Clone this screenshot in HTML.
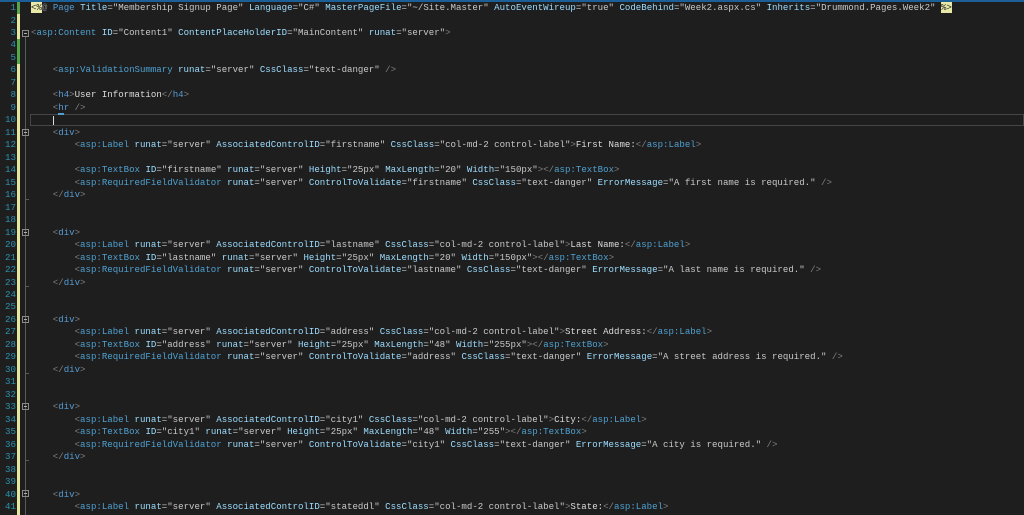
<!DOCTYPE html>
<html><head><meta charset="utf-8"><style>
html,body{margin:0;padding:0;background:#1e1e1e;width:1024px;height:515px;overflow:hidden}
body{position:relative;font-family:"Liberation Mono",monospace;font-size:9.08px}
.ln{position:absolute;left:0;width:16px;text-align:right;color:#2b91af;height:12.475px;line-height:12.475px;font-size:9.17px}
.c{position:absolute;left:31px;white-space:pre;color:#c8c8c8;height:12.475px;line-height:12.475px}
.g{color:#808080}.e{color:#4fa0d0}.d{color:#569cd6}.a{color:#9cdcfe}.t{color:#dcdcdc}
.bar{position:absolute;left:17px;width:3px}
.box{position:absolute;left:22px;width:7px;height:7px;border:1px solid #8a8a8a;box-sizing:border-box}
.box:after{content:"";position:absolute;left:1px;top:2px;width:3px;height:1px;background:#b0b0b0}
.vl{position:absolute;left:25px;width:1px;background:#5a5a5a}
.end{position:absolute;left:25px;width:4px;height:1px;background:#5a5a5a}
.hl{background:#e8e8a8;color:#1e1e1e}
</style></head><body>
<div style="position:absolute;left:0;top:0;width:1024px;height:2px;background:#1c6fb5;opacity:.8"></div>
<div class="bar" style="top:2px;height:12px;background:#57a64a"></div>
<div class="bar" style="top:14px;height:25px;background:#e6e6a0"></div>
<div class="bar" style="top:39px;height:25px;background:#57a64a"></div>
<div class="bar" style="top:64px;height:451px;background:#e6e6a0"></div>
<div style="position:absolute;left:30px;top:114px;width:994px;height:12px;border:1px solid #464646;box-sizing:border-box"></div>
<div style="position:absolute;left:53px;top:116px;width:1px;height:9px;background:#dcdcdc"></div>
<div style="position:absolute;left:58px;top:113px;width:6px;height:2px;background:#4fa0d0"></div>

<div class="box" style="top:30px"></div><div class="vl" style="top:37px;height:478px"></div>
<div class="box" style="top:129px"></div><div class="end" style="top:199px"></div>
<div class="box" style="top:229px"></div><div class="end" style="top:286px"></div>
<div class="box" style="top:316px"></div><div class="end" style="top:373px"></div>
<div class="box" style="top:403px"></div><div class="end" style="top:460px"></div>
<div class="box" style="top:490px"></div>

<div class="ln" style="top:2px">1</div>
<div class="ln" style="top:14.5px">2</div>
<div class="ln" style="top:26.9px">3</div>
<div class="ln" style="top:39.4px">4</div>
<div class="ln" style="top:51.9px">5</div>
<div class="ln" style="top:64.4px">6</div>
<div class="ln" style="top:76.9px">7</div>
<div class="ln" style="top:89.3px">8</div>
<div class="ln" style="top:101.8px">9</div>
<div class="ln" style="top:114.3px">10</div>
<div class="ln" style="top:126.8px">11</div>
<div class="ln" style="top:139.2px">12</div>
<div class="ln" style="top:151.7px">13</div>
<div class="ln" style="top:164.2px">14</div>
<div class="ln" style="top:176.7px">15</div>
<div class="ln" style="top:189.1px">16</div>
<div class="ln" style="top:201.6px">17</div>
<div class="ln" style="top:214.1px">18</div>
<div class="ln" style="top:226.6px">19</div>
<div class="ln" style="top:239px">20</div>
<div class="ln" style="top:251.5px">21</div>
<div class="ln" style="top:264px">22</div>
<div class="ln" style="top:276.5px">23</div>
<div class="ln" style="top:289px">24</div>
<div class="ln" style="top:301.4px">25</div>
<div class="ln" style="top:313.9px">26</div>
<div class="ln" style="top:326.4px">27</div>
<div class="ln" style="top:338.9px">28</div>
<div class="ln" style="top:351.3px">29</div>
<div class="ln" style="top:363.8px">30</div>
<div class="ln" style="top:376.3px">31</div>
<div class="ln" style="top:388.8px">32</div>
<div class="ln" style="top:401.2px">33</div>
<div class="ln" style="top:413.7px">34</div>
<div class="ln" style="top:426.2px">35</div>
<div class="ln" style="top:438.7px">36</div>
<div class="ln" style="top:451.1px">37</div>
<div class="ln" style="top:463.6px">38</div>
<div class="ln" style="top:476.1px">39</div>
<div class="ln" style="top:488.6px">40</div>
<div class="ln" style="top:501px">41</div>

<div class="c" style="top:2px"><span class="hl">&lt;%</span><span class="g">@</span> <span class="d">Page</span> <span class="a">Title</span>="Membership Signup Page" <span class="a">Language</span>="C#" <span class="a">MasterPageFile</span>="~/Site.Master" <span class="a">AutoEventWireup</span>="true" <span class="a">CodeBehind</span>="Week2.aspx.cs" <span class="a">Inherits</span>="Drummond.Pages.Week2" <span class="hl">%&gt;</span></div>
<div class="c" style="top:26.9px"><span class="g">&lt;</span><span class="e">asp:Content</span> <span class="a">ID</span>="Content1" <span class="a">ContentPlaceHolderID</span>="MainContent" <span class="a">runat</span>="server"<span class="g">&gt;</span></div>
<div class="c" style="top:64.4px">    <span class="g">&lt;</span><span class="e">asp:ValidationSummary</span> <span class="a">runat</span>="server" <span class="a">CssClass</span>="text-danger" <span class="g">/&gt;</span></div>
<div class="c" style="top:89.3px">    <span class="g">&lt;</span><span class="d">h4</span><span class="g">&gt;</span><span class="t">User Information</span><span class="g">&lt;/</span><span class="d">h4</span><span class="g">&gt;</span></div>
<div class="c" style="top:101.8px">    <span class="g">&lt;</span><span class="d">hr</span> <span class="g">/&gt;</span></div>

<div class="c" style="top:126.8px">    <span class="g">&lt;</span><span class="d">div</span><span class="g">&gt;</span></div>
<div class="c" style="top:139.2px">        <span class="g">&lt;</span><span class="e">asp:Label</span> <span class="a">runat</span>="server" <span class="a">AssociatedControlID</span>="firstname" <span class="a">CssClass</span>="col-md-2 control-label"<span class="g">&gt;</span><span class="t">First Name:</span><span class="g">&lt;/</span><span class="e">asp:Label</span><span class="g">&gt;</span></div>
<div class="c" style="top:164.2px">        <span class="g">&lt;</span><span class="e">asp:TextBox</span> <span class="a">ID</span>="firstname" <span class="a">runat</span>="server" <span class="a">Height</span>="25px" <span class="a">MaxLength</span>="20" <span class="a">Width</span>="150px"<span class="g">&gt;&lt;/</span><span class="e">asp:TextBox</span><span class="g">&gt;</span></div>
<div class="c" style="top:176.7px">        <span class="g">&lt;</span><span class="e">asp:RequiredFieldValidator</span> <span class="a">runat</span>="server" <span class="a">ControlToValidate</span>="firstname" <span class="a">CssClass</span>="text-danger" <span class="a">ErrorMessage</span>="A first name is required." <span class="g">/&gt;</span></div>
<div class="c" style="top:189.1px">    <span class="g">&lt;/</span><span class="d">div</span><span class="g">&gt;</span></div>

<div class="c" style="top:226.6px">    <span class="g">&lt;</span><span class="d">div</span><span class="g">&gt;</span></div>
<div class="c" style="top:239px">        <span class="g">&lt;</span><span class="e">asp:Label</span> <span class="a">runat</span>="server" <span class="a">AssociatedControlID</span>="lastname" <span class="a">CssClass</span>="col-md-2 control-label"<span class="g">&gt;</span><span class="t">Last Name:</span><span class="g">&lt;/</span><span class="e">asp:Label</span><span class="g">&gt;</span></div>
<div class="c" style="top:251.5px">        <span class="g">&lt;</span><span class="e">asp:TextBox</span> <span class="a">ID</span>="lastname" <span class="a">runat</span>="server" <span class="a">Height</span>="25px" <span class="a">MaxLength</span>="20" <span class="a">Width</span>="150px"<span class="g">&gt;&lt;/</span><span class="e">asp:TextBox</span><span class="g">&gt;</span></div>
<div class="c" style="top:264px">        <span class="g">&lt;</span><span class="e">asp:RequiredFieldValidator</span> <span class="a">runat</span>="server" <span class="a">ControlToValidate</span>="lastname" <span class="a">CssClass</span>="text-danger" <span class="a">ErrorMessage</span>="A last name is required." <span class="g">/&gt;</span></div>
<div class="c" style="top:276.5px">    <span class="g">&lt;/</span><span class="d">div</span><span class="g">&gt;</span></div>

<div class="c" style="top:313.9px">    <span class="g">&lt;</span><span class="d">div</span><span class="g">&gt;</span></div>
<div class="c" style="top:326.4px">        <span class="g">&lt;</span><span class="e">asp:Label</span> <span class="a">runat</span>="server" <span class="a">AssociatedControlID</span>="address" <span class="a">CssClass</span>="col-md-2 control-label"<span class="g">&gt;</span><span class="t">Street Address:</span><span class="g">&lt;/</span><span class="e">asp:Label</span><span class="g">&gt;</span></div>
<div class="c" style="top:338.9px">        <span class="g">&lt;</span><span class="e">asp:TextBox</span> <span class="a">ID</span>="address" <span class="a">runat</span>="server" <span class="a">Height</span>="25px" <span class="a">MaxLength</span>="48" <span class="a">Width</span>="255px"<span class="g">&gt;&lt;/</span><span class="e">asp:TextBox</span><span class="g">&gt;</span></div>
<div class="c" style="top:351.3px">        <span class="g">&lt;</span><span class="e">asp:RequiredFieldValidator</span> <span class="a">runat</span>="server" <span class="a">ControlToValidate</span>="address" <span class="a">CssClass</span>="text-danger" <span class="a">ErrorMessage</span>="A street address is required." <span class="g">/&gt;</span></div>
<div class="c" style="top:363.8px">    <span class="g">&lt;/</span><span class="d">div</span><span class="g">&gt;</span></div>

<div class="c" style="top:401.2px">    <span class="g">&lt;</span><span class="d">div</span><span class="g">&gt;</span></div>
<div class="c" style="top:413.7px">        <span class="g">&lt;</span><span class="e">asp:Label</span> <span class="a">runat</span>="server" <span class="a">AssociatedControlID</span>="city1" <span class="a">CssClass</span>="col-md-2 control-label"<span class="g">&gt;</span><span class="t">City:</span><span class="g">&lt;/</span><span class="e">asp:Label</span><span class="g">&gt;</span></div>
<div class="c" style="top:426.2px">        <span class="g">&lt;</span><span class="e">asp:TextBox</span> <span class="a">ID</span>="city1" <span class="a">runat</span>="server" <span class="a">Height</span>="25px" <span class="a">MaxLength</span>="48" <span class="a">Width</span>="255"<span class="g">&gt;&lt;/</span><span class="e">asp:TextBox</span><span class="g">&gt;</span></div>
<div class="c" style="top:438.7px">        <span class="g">&lt;</span><span class="e">asp:RequiredFieldValidator</span> <span class="a">runat</span>="server" <span class="a">ControlToValidate</span>="city1" <span class="a">CssClass</span>="text-danger" <span class="a">ErrorMessage</span>="A city is required." <span class="g">/&gt;</span></div>
<div class="c" style="top:451.1px">    <span class="g">&lt;/</span><span class="d">div</span><span class="g">&gt;</span></div>

<div class="c" style="top:488.6px">    <span class="g">&lt;</span><span class="d">div</span><span class="g">&gt;</span></div>
<div class="c" style="top:501px">        <span class="g">&lt;</span><span class="e">asp:Label</span> <span class="a">runat</span>="server" <span class="a">AssociatedControlID</span>="stateddl" <span class="a">CssClass</span>="col-md-2 control-label"<span class="g">&gt;</span><span class="t">State:</span><span class="g">&lt;/</span><span class="e">asp:Label</span><span class="g">&gt;</span></div>
</body></html>
